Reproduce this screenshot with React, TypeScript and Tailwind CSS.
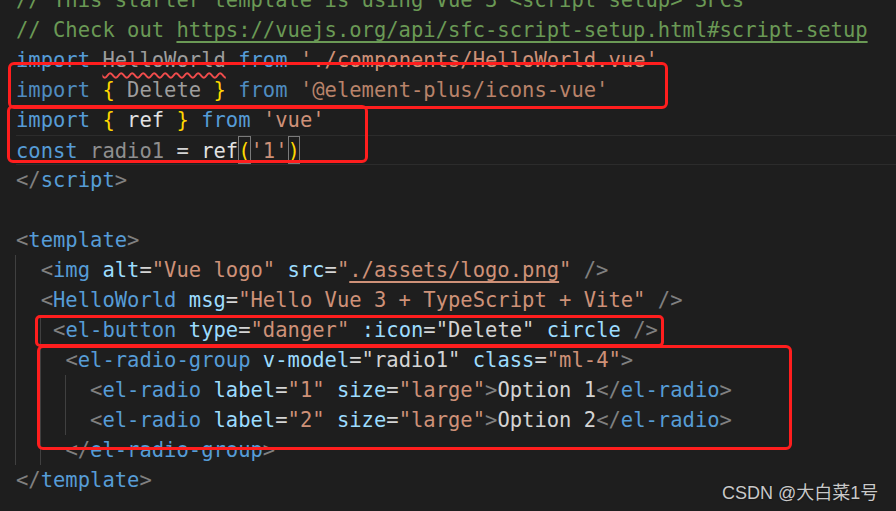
import React from "react";

type Tok = [string, string?];

const CM = "text-[#6a9955]";
const KW = "text-[#569cd6]";
const KWD = "text-[#4f8cc0]";
const ID = "text-[#9d9d9d]";
const W = "text-[#d4d4d4]";
const RF = "text-[#e2e2e2]";
const BR = "text-[#ffd700]";
const ST = "text-[#ce9178]";
const PU = "text-[#808080]";
const TG = "text-[#569cd6]";
const AT = "text-[#9cdcfe]";

const Line = ({ children, cls = "" }: { children?: React.ReactNode; cls?: string }) => (
  <div className={"h-[30px] leading-[30px] whitespace-pre box-border " + cls}>{children}</div>
);

const T = ({ toks }: { toks: Tok[] }) => (
  <>
    {toks.map((t, i) => (
      <span key={i} className={t[1] ?? W}>
        {t[0]}
      </span>
    ))}
  </>
);

export default function App() {
  return (
    <div className="relative w-[896px] h-[511px] overflow-hidden bg-[#1e1e1e]">
      <div
        className="-mt-[15px] pl-[16px] text-[20.5px] text-[#d4d4d4]"
        style={{ fontFamily: '"DejaVu Sans Mono", "Liberation Mono", monospace' }}
      >
        <Line>
          <T toks={[["// This starter template is using Vue 3 <script setup> SFCs", CM]]} />
        </Line>
        <Line>
          <span className={CM}>// Check out </span>
          <span className={CM + " underline underline-offset-[4px] decoration-[1.5px]"}>
            https://vuejs.org/api/sfc-script-setup.html#script-setup
          </span>
        </Line>
        <Line>
          <span className={KW}>import </span>
          <span className={ID + " underline decoration-wavy decoration-[#f14c4c] decoration-[1.5px] underline-offset-[5px]"}>HelloWorld</span>
          <T toks={[[" ", W], ["from", KW], [" ", W], ["'./components/HelloWorld.vue'", ST]]} />
        </Line>
        <Line>
          <T
            toks={[
              ["import", KWD],
              [" ", W],
              ["{", BR],
              [" Delete ", ID],
              ["}", BR],
              [" ", W],
              ["from", KWD],
              [" ", W],
              ["'@element-plus/icons-vue'", "text-[#b9836a]"],
            ]}
          />
        </Line>
        <Line>
          <T
            toks={[
              ["import", KW],
              [" ", W],
              ["{", BR],
              [" ref ", RF],
              ["}", BR],
              [" ", W],
              ["from", KW],
              [" ", W],
              ["'vue'", ST],
            ]}
          />
        </Line>
        <Line cls="border-y border-[#2c2c2c] leading-[28px]">
          <T toks={[["const", KW], [" ", W], ["radio1", "text-[#8f8f8f]"], [" = ", W], ["ref", RF]]} />
          <span className={BR + " inline-block h-[28px] outline outline-1 outline-[#7a7a7a] -outline-offset-1 align-top"}>(</span>
          <span className={ST}>'1'</span>
          <span className={BR + " inline-block h-[28px] outline outline-1 outline-[#7a7a7a] -outline-offset-1 align-top"}>)</span>
        </Line>
        <Line>
          <T toks={[["</", PU], ["script", TG], [">", PU]]} />
        </Line>
        <Line />
        <Line>
          <T toks={[["<", PU], ["template", TG], [">", PU]]} />
        </Line>
        <Line>
          <T
            toks={[
              ["  ", W],
              ["<", PU],
              ["img", TG],
              [" ", W],
              ["alt", AT],
              ["=", W],
              ['"Vue logo"', ST],
              [" ", W],
              ["src", AT],
              ["=", W],
              ['"', ST],
            ]}
          />
          <span className={ST + " underline underline-offset-[4px] decoration-[1.5px]"}>./assets/logo.png</span>
          <T toks={[['"', ST], [" ", W], ["/>", PU]]} />
        </Line>
        <Line>
          <T
            toks={[
              ["  ", W],
              ["<", PU],
              ["HelloWorld", TG],
              [" ", W],
              ["msg", AT],
              ["=", W],
              ['"Hello Vue 3 + TypeScript + Vite"', ST],
              [" ", W],
              ["/>", PU],
            ]}
          />
        </Line>
        <Line>
          <T
            toks={[
              ["   ", W],
              ["<", PU],
              ["el-button", TG],
              [" ", W],
              ["type", AT],
              ["=", W],
              ['"danger"', ST],
              [" ", W],
              [":icon", AT],
              ["=", W],
              ['"Delete"', W],
              [" ", W],
              ["circle", AT],
              [" ", W],
              ["/>", PU],
            ]}
          />
        </Line>
        <Line>
          <T
            toks={[
              ["    ", W],
              ["<", PU],
              ["el-radio-group", TG],
              [" ", W],
              ["v-model", AT],
              ["=", W],
              ['"radio1"', W],
              [" ", W],
              ["class", AT],
              ["=", W],
              ['"ml-4"', ST],
              [">", PU],
            ]}
          />
        </Line>
        <Line>
          <T
            toks={[
              ["      ", W],
              ["<", PU],
              ["el-radio", TG],
              [" ", W],
              ["label", AT],
              ["=", W],
              ['"1"', ST],
              [" ", W],
              ["size", AT],
              ["=", W],
              ['"large"', ST],
              [">", PU],
              ["Option 1", W],
              ["</", PU],
              ["el-radio", TG],
              [">", PU],
            ]}
          />
        </Line>
        <Line>
          <T
            toks={[
              ["      ", W],
              ["<", PU],
              ["el-radio", TG],
              [" ", W],
              ["label", AT],
              ["=", W],
              ['"2"', ST],
              [" ", W],
              ["size", AT],
              ["=", W],
              ['"large"', ST],
              [">", PU],
              ["Option 2", W],
              ["</", PU],
              ["el-radio", TG],
              [">", PU],
            ]}
          />
        </Line>
        <Line>
          <T toks={[["    ", W], ["</", PU], ["el-radio-group", TG], [">", PU]]} />
        </Line>
        <Line>
          <T toks={[["</", PU], ["template", TG], [">", PU]]} />
        </Line>
      </div>

      {/* indent guides */}
      <div className="absolute left-[15px] top-[255px] w-px h-[210px] bg-[#404040]" />
      <div className="absolute left-[40px] top-[315px] w-px h-[150px] bg-[#404040]" />
      <div className="absolute left-[65px] top-[375px] w-px h-[60px] bg-[#404040]" />

      {/* red annotation boxes */}
      <div className="absolute left-[8px] top-[62px] w-[660px] h-[47px] border-[3px] border-[#ff1e1e] rounded-[6px]" />
      <div className="absolute left-[7px] top-[105px] w-[361px] h-[58px] border-[3px] border-[#ff1e1e] rounded-[6px]" />
      <div className="absolute left-[35px] top-[315px] w-[629px] h-[32px] border-[3px] border-[#ff1e1e] rounded-[5px]" />
      <div className="absolute left-[37px] top-[345px] w-[755px] h-[105px] border-[3px] border-[#ff1e1e] rounded-[6px]" />

      {/* watermark */}
      <div
        className="absolute left-[722px] top-[481px] text-[18px] leading-[24px] text-[#c9c9c9] whitespace-nowrap [text-shadow:0_0_2px_rgba(0,0,0,0.6)]"
        style={{ fontFamily: '"Liberation Sans", "Noto Sans CJK SC", sans-serif' }}
      >
        CSDN @大白菜1号
      </div>
    </div>
  );
}
